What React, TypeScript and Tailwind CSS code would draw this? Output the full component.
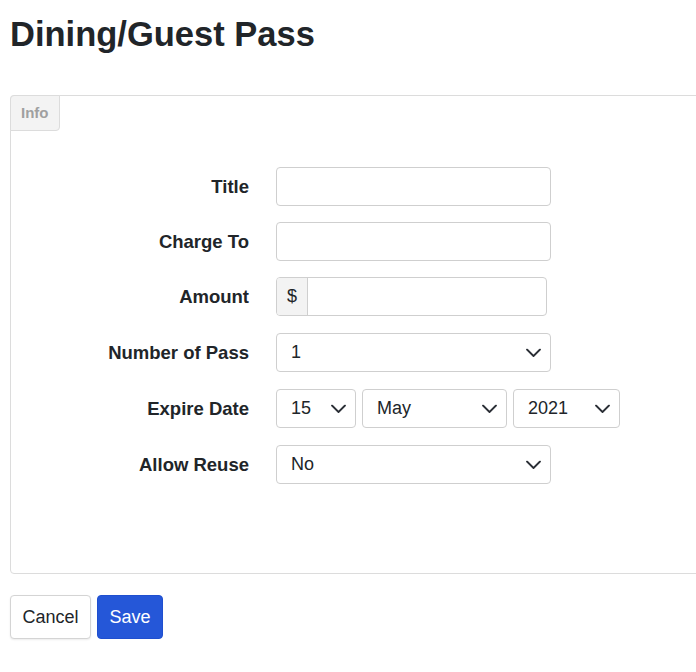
import React from "react";

const Chevron = () => (
  <svg
    className="pointer-events-none absolute right-[10px] top-1/2 -translate-y-1/2"
    width="15"
    height="9"
    viewBox="0 0 15 9"
    fill="none"
  >
    <path d="M1 1l6.5 6.5L14 1" stroke="#2b2f36" strokeWidth="1.8" strokeLinecap="round" strokeLinejoin="round" />
  </svg>
);

const Select = ({ value, options, className }: { value: string; options: string[]; className: string }) => (
  <div className={"relative h-[39px] " + className}>
    <select
      defaultValue={value}
      className="h-full w-full appearance-none rounded-[4px] border border-[#cfcfcf] bg-white pl-[14px] pr-8 text-[18px] text-[#212529] outline-none"
    >
      {options.map((o) => (
        <option key={o}>{o}</option>
      ))}
    </select>
    <Chevron />
  </div>
);

const Row = ({ label, children, className }: { label: string; children: React.ReactNode; className?: string }) => (
  <div className={"flex h-[39px] items-center " + (className ?? "")}>
    <label className="w-[238px] shrink-0 text-right text-[18.5px] font-bold text-[#212529]">{label}</label>
    <div className="ml-[27px] flex gap-[6px]">{children}</div>
  </div>
);

export default function App() {
  return (
    <div className="min-h-[672px] w-[696px] overflow-hidden bg-white px-[10px] font-['Liberation_Sans',Arial,sans-serif]">
      <h1 className="pt-[14px] text-[34.5px] font-bold leading-[40px] text-[#212529]">Dining/Guest Pass</h1>

      {/* panel */}
      <div className="mt-[41px] h-[479px] w-[720px] rounded-[4px] border border-[#dcdcdc]">
        <div className="-ml-px -mt-px inline-block h-[36px] rounded-tl-[4px] rounded-br-[4px] border border-[#dcdcdc] bg-[#f3f3f3] px-[10px] text-[15px] font-bold leading-[34px] text-[#a0a0a0]">
          Info
        </div>

        <div className="mt-[36px] flex flex-col">
          <Row label="Title" className="mb-[16px]">
            <input className="h-[39px] w-[275px] rounded-[4px] border border-[#cfcfcf] px-3 text-[18px] outline-none" />
          </Row>
          <Row label="Charge To" className="mb-[16px]">
            <input className="h-[39px] w-[275px] rounded-[4px] border border-[#cfcfcf] px-3 text-[18px] outline-none" />
          </Row>
          <Row label="Amount" className="mb-[17px]">
            <div className="flex h-[39px] w-[271px] overflow-hidden rounded-[4px] border border-[#cfcfcf]">
              <span className="flex w-[31px] shrink-0 items-center justify-center border-r border-[#cfcfcf] bg-[#f3f3f3] text-[18px] text-[#212529]">
                $
              </span>
              <input className="min-w-0 flex-1 px-3 text-[18px] outline-none" />
            </div>
          </Row>
          <Row label="Number of Pass" className="mb-[17px]">
            <Select value="1" options={["1", "2", "3", "4", "5"]} className="w-[275px]" />
          </Row>
          <Row label="Expire Date" className="mb-[17px]">
            <Select value="15" options={["14", "15", "16"]} className="w-[80px]" />
            <Select value="May" options={["April", "May", "June"]} className="w-[145px]" />
            <Select value="2021" options={["2020", "2021", "2022"]} className="w-[107px]" />
          </Row>
          <Row label="Allow Reuse">
            <Select value="No" options={["No", "Yes"]} className="w-[275px]" />
          </Row>
        </div>
      </div>

      <div className="mt-[21px] flex gap-[6px]">
        <button className="h-[44px] rounded-[4px] border border-[#d4d4d4] bg-white px-[11.5px] text-[18px] text-[#212529] shadow-[0_1px_2px_rgba(0,0,0,0.08)]">
          Cancel
        </button>
        <button className="h-[44px] rounded-[4px] border border-[#1f4fcf] bg-[#2557d8] px-[11.5px] text-[18px] text-white">
          Save
        </button>
      </div>
    </div>
  );
}
